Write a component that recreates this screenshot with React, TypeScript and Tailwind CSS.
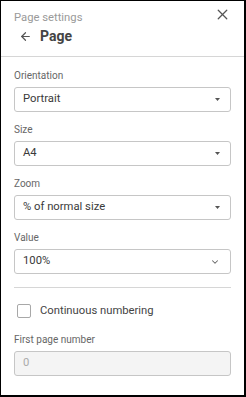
import { ArrowLeft, X, ChevronDown } from 'lucide-react';

const font = { fontFamily: 'Roboto, "Liberation Sans", sans-serif' };

function Caret() {
  return (
    <svg width="5" height="3" viewBox="0 0 5 3" className="shrink-0">
      <path d="M0 0 H5 L2.5 3 Z" fill="#555" />
    </svg>
  );
}

function Select({ value, chevron }: { value: string; chevron?: boolean }) {
  return (
    <div className="h-[25px] flex items-center justify-between border border-[#c6c6c6] rounded-[3px] pl-[8px] pr-[10px] text-[11.25px] text-[#3a3a3a]">
      <span>{value}</span>
      {chevron ? <ChevronDown size={10} strokeWidth={2.5} color="#666" /> : <Caret />}
    </div>
  );
}

function Field({ label, children }: { label: string; children: React.ReactNode }) {
  return (
    <div className="flex flex-col">
      <div className="text-[10px] leading-[14px] text-[#666] mb-[4px]">{label}</div>
      {children}
    </div>
  );
}

export default function App() {
  return (
    <div
      style={font}
      className="w-[246px] h-[397px] bg-white border border-black border-r-2 border-b-2 flex flex-col"
    >
      <div className="relative pl-[13px] pt-[10px] h-[56px] border-b border-[#d6d6d6]">
        <div className="text-[11.25px] leading-[14px] text-[#9a9a9a]">Page settings</div>
        <div className="flex items-center gap-[8px] mt-[2px] pl-[5px]">
          <ArrowLeft size={13} strokeWidth={2.2} color="#555" />
          <span className="text-[14px] font-bold text-[#444] leading-[18px]">Page</span>
        </div>
        <button className="absolute left-[213px] top-[5px]">
          <X size={17} strokeWidth={1.8} color="#555" />
        </button>
      </div>

      <div className="px-[13px] pt-[12px] flex flex-col gap-[11px]">
        <Field label="Orientation">
          <Select value="Portrait" />
        </Field>
        <Field label="Size">
          <Select value="A4" />
        </Field>
        <Field label="Zoom">
          <Select value="% of normal size" />
        </Field>
        <Field label="Value">
          <Select value="100%" chevron />
        </Field>
      </div>

      <div className="mx-[13px] mt-[13px] border-t border-[#d6d6d6]" />

      <div className="px-[13px] pt-[16px] flex flex-col">
        <label className="flex items-center gap-[9px] pl-[3px] h-[14px]">
          <span className="w-[14px] h-[14px] border border-[#a8a8a8] rounded-[2px] bg-white" />
          <span className="text-[11.25px] text-[#444]">Continuous numbering</span>
        </label>
        <div className="mt-[15px]">
          <Field label="First page number">
            <div className="h-[25px] flex items-center border border-[#c6c6c6] rounded-[3px] bg-[#f4f4f4] pl-[8px] text-[11.25px] text-[#aaa]">
              0
            </div>
          </Field>
        </div>
      </div>
    </div>
  );
}
